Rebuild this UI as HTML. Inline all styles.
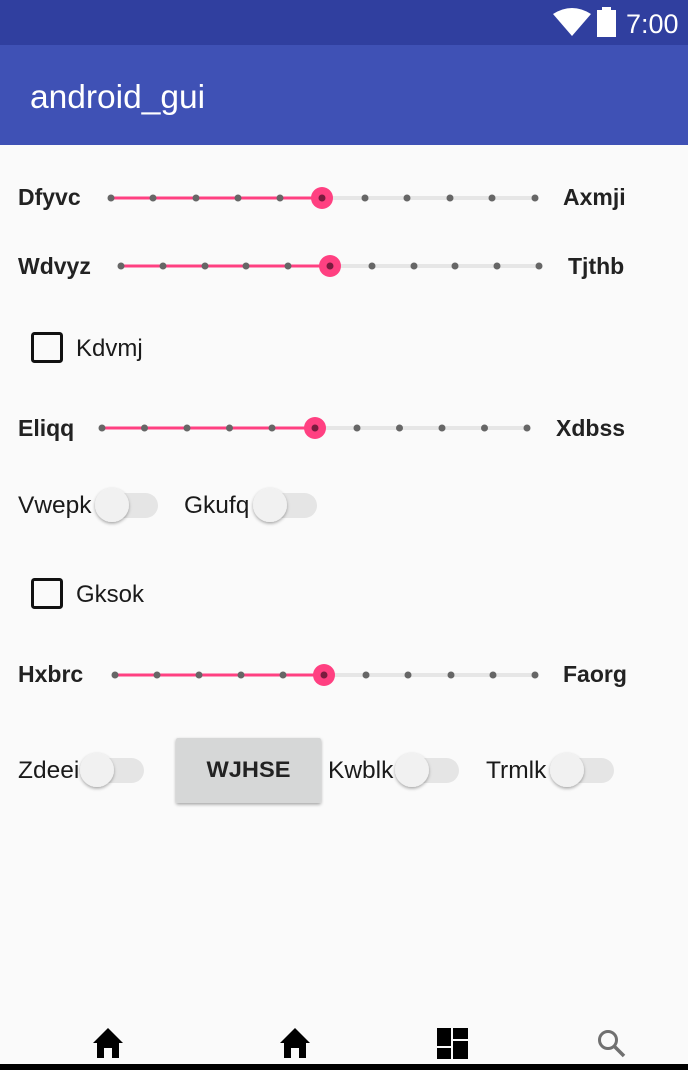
<!DOCTYPE html>
<html><head><meta charset="utf-8"><style>
html,body{margin:0;padding:0;width:688px;height:1070px;overflow:hidden;background:#fafafa}
svg{display:block}
text{font-family:"Liberation Sans",sans-serif}
.b{font-weight:bold;font-size:23px;fill:#222}
.r{font-size:24.5px;fill:#1a1a1a}
.c{font-size:24px;fill:#1a1a1a}
</style></head><body>
<svg width="688" height="1070" viewBox="0 0 688 1070">
<defs>
<filter id="sh" x="-50%" y="-50%" width="200%" height="200%"><feDropShadow dx="0" dy="1.5" stdDeviation="1.5" flood-color="#000" flood-opacity="0.35"/></filter>
</defs>
<rect width="688" height="1070" fill="#fafafa"/>
<rect width="688" height="45" fill="#303f9f"/>
<rect y="45" width="688" height="100" fill="#3f51b5"/>
<path d="M553 14 Q572 2 591 14 L572 36 Z" fill="#fff"/>
<rect x="597" y="10" width="19" height="27" fill="#fff"/><rect x="602" y="7" width="9" height="4" fill="#fff"/>
<text x="626" y="33" font-size="27" fill="#fff">7:00</text>
<text x="30" y="108" font-size="33.5" fill="#fff">android_gui</text>

<!-- slider 1 -->
<text class="b" x="18" y="205">Dfyvc</text>
<line x1="322" y1="198" x2="535" y2="198" stroke="#e6e6e6" stroke-width="4"/>
<line x1="111" y1="198" x2="322" y2="198" stroke="#ff4081" stroke-width="3"/>
<g fill="#666"><circle cx="111" cy="198" r="3.5"/><circle cx="153" cy="198" r="3.5"/><circle cx="196" cy="198" r="3.5"/><circle cx="238" cy="198" r="3.5"/><circle cx="280" cy="198" r="3.5"/><circle cx="365" cy="198" r="3.5"/><circle cx="407" cy="198" r="3.5"/><circle cx="450" cy="198" r="3.5"/><circle cx="492" cy="198" r="3.5"/><circle cx="535" cy="198" r="3.5"/></g>
<circle cx="322" cy="198" r="11" fill="#ff4081"/><circle cx="322" cy="198" r="3.5" fill="#7a1b3e"/>
<text class="b" x="563" y="205">Axmji</text>

<!-- slider 2 -->
<text class="b" x="18" y="274">Wdvyz</text>
<line x1="330" y1="266" x2="539" y2="266" stroke="#e6e6e6" stroke-width="4"/>
<line x1="121" y1="266" x2="330" y2="266" stroke="#ff4081" stroke-width="3"/>
<g fill="#666"><circle cx="121" cy="266" r="3.5"/><circle cx="163" cy="266" r="3.5"/><circle cx="205" cy="266" r="3.5"/><circle cx="246" cy="266" r="3.5"/><circle cx="288" cy="266" r="3.5"/><circle cx="372" cy="266" r="3.5"/><circle cx="414" cy="266" r="3.5"/><circle cx="455" cy="266" r="3.5"/><circle cx="497" cy="266" r="3.5"/><circle cx="539" cy="266" r="3.5"/></g>
<circle cx="330" cy="266" r="11" fill="#ff4081"/><circle cx="330" cy="266" r="3.5" fill="#7a1b3e"/>
<text class="b" x="568" y="274">Tjthb</text>

<!-- checkbox 1 -->
<rect x="32.5" y="333.5" width="29" height="28" rx="2" fill="none" stroke="#111" stroke-width="3"/>
<text class="c" x="76" y="356">Kdvmj</text>

<!-- slider 3 -->
<text class="b" x="18" y="436">Eliqq</text>
<line x1="315" y1="428" x2="527" y2="428" stroke="#e6e6e6" stroke-width="4"/>
<line x1="102" y1="428" x2="315" y2="428" stroke="#ff4081" stroke-width="3"/>
<g fill="#666"><circle cx="102" cy="428" r="3.5"/><circle cx="144.5" cy="428" r="3.5"/><circle cx="187" cy="428" r="3.5"/><circle cx="229.5" cy="428" r="3.5"/><circle cx="272" cy="428" r="3.5"/><circle cx="357" cy="428" r="3.5"/><circle cx="399.5" cy="428" r="3.5"/><circle cx="442" cy="428" r="3.5"/><circle cx="484.5" cy="428" r="3.5"/><circle cx="527" cy="428" r="3.5"/></g>
<circle cx="315" cy="428" r="11" fill="#ff4081"/><circle cx="315" cy="428" r="3.5" fill="#7a1b3e"/>
<text class="b" x="556" y="436">Xdbss</text>

<!-- switches row -->
<text class="r" x="18" y="513">Vwepk</text>
<rect x="100" y="493" width="58" height="25" rx="12.5" fill="#e5e5e5"/>
<circle cx="112" cy="505" r="17" fill="#f1f1f1" filter="url(#sh)"/>
<text class="r" x="184" y="513">Gkufq</text>
<rect x="259" y="493" width="58" height="25" rx="12.5" fill="#e5e5e5"/>
<circle cx="270" cy="505" r="17" fill="#f1f1f1" filter="url(#sh)"/>

<!-- checkbox 2 -->
<rect x="32.5" y="579.5" width="29" height="28" rx="2" fill="none" stroke="#111" stroke-width="3"/>
<text class="c" x="76" y="602">Gksok</text>

<!-- slider 4 -->
<text class="b" x="18" y="682">Hxbrc</text>
<line x1="324" y1="675" x2="535" y2="675" stroke="#e6e6e6" stroke-width="4"/>
<line x1="115" y1="675" x2="324" y2="675" stroke="#ff4081" stroke-width="3"/>
<g fill="#666"><circle cx="115" cy="675" r="3.5"/><circle cx="157" cy="675" r="3.5"/><circle cx="199" cy="675" r="3.5"/><circle cx="241" cy="675" r="3.5"/><circle cx="283" cy="675" r="3.5"/><circle cx="366" cy="675" r="3.5"/><circle cx="408" cy="675" r="3.5"/><circle cx="451" cy="675" r="3.5"/><circle cx="493" cy="675" r="3.5"/><circle cx="535" cy="675" r="3.5"/></g>
<circle cx="324" cy="675" r="11" fill="#ff4081"/><circle cx="324" cy="675" r="3.5" fill="#7a1b3e"/>
<text class="b" x="563" y="682">Faorg</text>

<!-- bottom row -->
<text class="r" x="18" y="778">Zdeei</text>
<rect x="86" y="758" width="58" height="25" rx="12.5" fill="#e5e5e5"/>
<circle cx="97" cy="770" r="17" fill="#f1f1f1" filter="url(#sh)"/>
<rect x="176" y="738" width="145" height="65" rx="2" fill="#d6d7d7" filter="url(#sh)"/>
<text x="248.5" y="777" font-size="22" font-weight="bold" fill="#222" text-anchor="middle" textLength="84" lengthAdjust="spacingAndGlyphs">WJHSE</text>
<text class="r" x="328" y="778">Kwblk</text>
<rect x="401" y="758" width="58" height="25" rx="12.5" fill="#e5e5e5"/>
<circle cx="412" cy="770" r="17" fill="#f1f1f1" filter="url(#sh)"/>
<text class="r" x="486" y="778">Trmlk</text>
<rect x="556" y="758" width="58" height="25" rx="12.5" fill="#e5e5e5"/>
<circle cx="567" cy="770" r="17" fill="#f1f1f1" filter="url(#sh)"/>

<!-- bottom nav -->
<path d="M108 1028 L93 1043 H97 V1058 H104 V1048 H112 V1058 H119 V1043 H123 Z" fill="#000"/>
<path d="M295 1028 L280 1043 H284 V1058 H291 V1048 H299 V1058 H306 V1043 H310 Z" fill="#000"/>
<rect x="437" y="1028" width="14" height="18" fill="#000"/><rect x="437" y="1048" width="14" height="11" fill="#000"/>
<rect x="453" y="1028" width="15" height="11" fill="#000"/><rect x="453" y="1041" width="15" height="18" fill="#000"/>
<circle cx="608" cy="1040" r="8.5" fill="none" stroke="#707070" stroke-width="3"/>
<line x1="614" y1="1046" x2="624" y2="1056" stroke="#707070" stroke-width="3.5"/>
<rect y="1064" width="688" height="6" fill="#000"/>
</svg>
</body></html>
